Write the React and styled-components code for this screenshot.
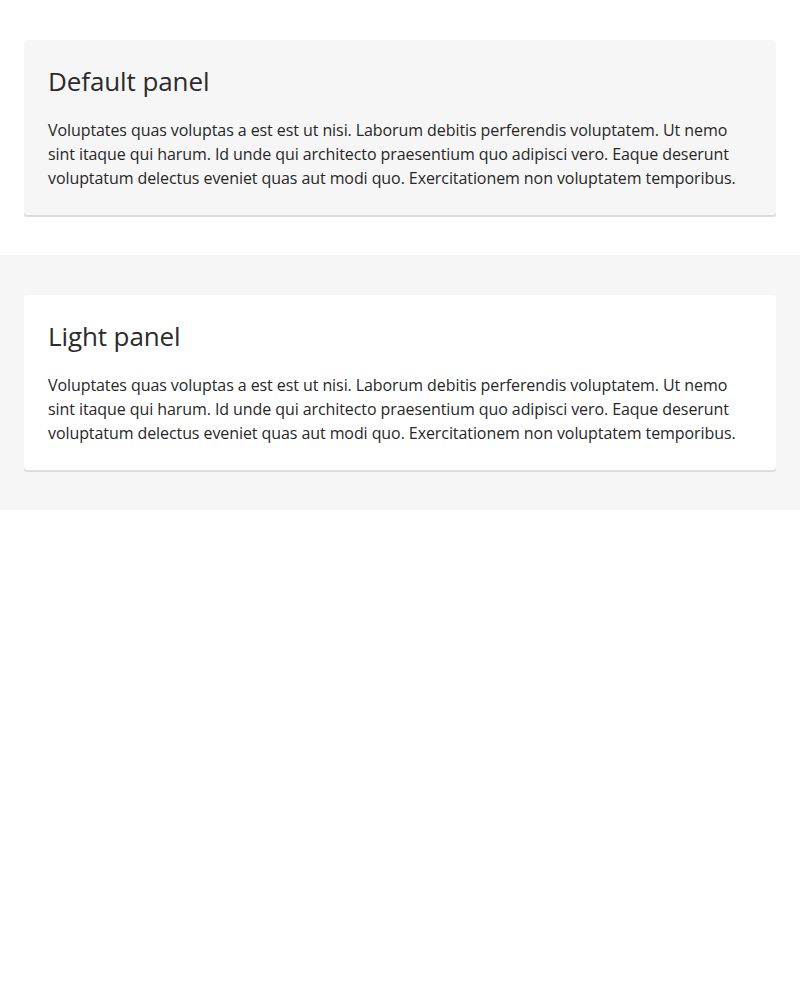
import React from "react";
import styled, { createGlobalStyle } from "styled-components";

const Global = createGlobalStyle`
  html, body { margin: 0; padding: 0; background: #ffffff; }
  body { font-family: "Open Sans", "Liberation Sans", sans-serif; color: #2d2d2d; }
`;

const Section = styled.section`
  background: ${(p) => (p.$tone === "gray" ? "#f6f6f6" : "#ffffff")};
  padding: 40px 24px;
`;

const Panel = styled.div`
  background: ${(p) => (p.$variant === "light" ? "#ffffff" : "#f6f6f6")};
  border-radius: 3px;
  box-shadow: 0 2px 0 #dcdcdc;
  padding: 24px 24px 25px;
`;

const Title = styled.h2`
  margin: 0 0 20px;
  font-size: 26px;
  line-height: 34px;
  font-weight: 400;
  color: #2b2b2b;
  letter-spacing: -0.1px;
`;

const Body = styled.p`
  margin: 0;
  font-size: 16px;
  line-height: 24px;
  color: #272727;
  letter-spacing: -0.08px;
`;

const text =
  "Voluptates quas voluptas a est est ut nisi. Laborum debitis perferendis voluptatem. Ut nemo sint itaque qui harum. Id unde qui architecto praesentium quo adipisci vero. Eaque deserunt voluptatum delectus eveniet quas aut modi quo. Exercitationem non voluptatem temporibus.";

export default function App() {
  return (
    <>
      <Global />
      <Section>
        <Panel>
          <Title>Default panel</Title>
          <Body>{text}</Body>
        </Panel>
      </Section>
      <Section $tone="gray">
        <Panel $variant="light">
          <Title>Light panel</Title>
          <Body>{text}</Body>
        </Panel>
      </Section>
    </>
  );
}
